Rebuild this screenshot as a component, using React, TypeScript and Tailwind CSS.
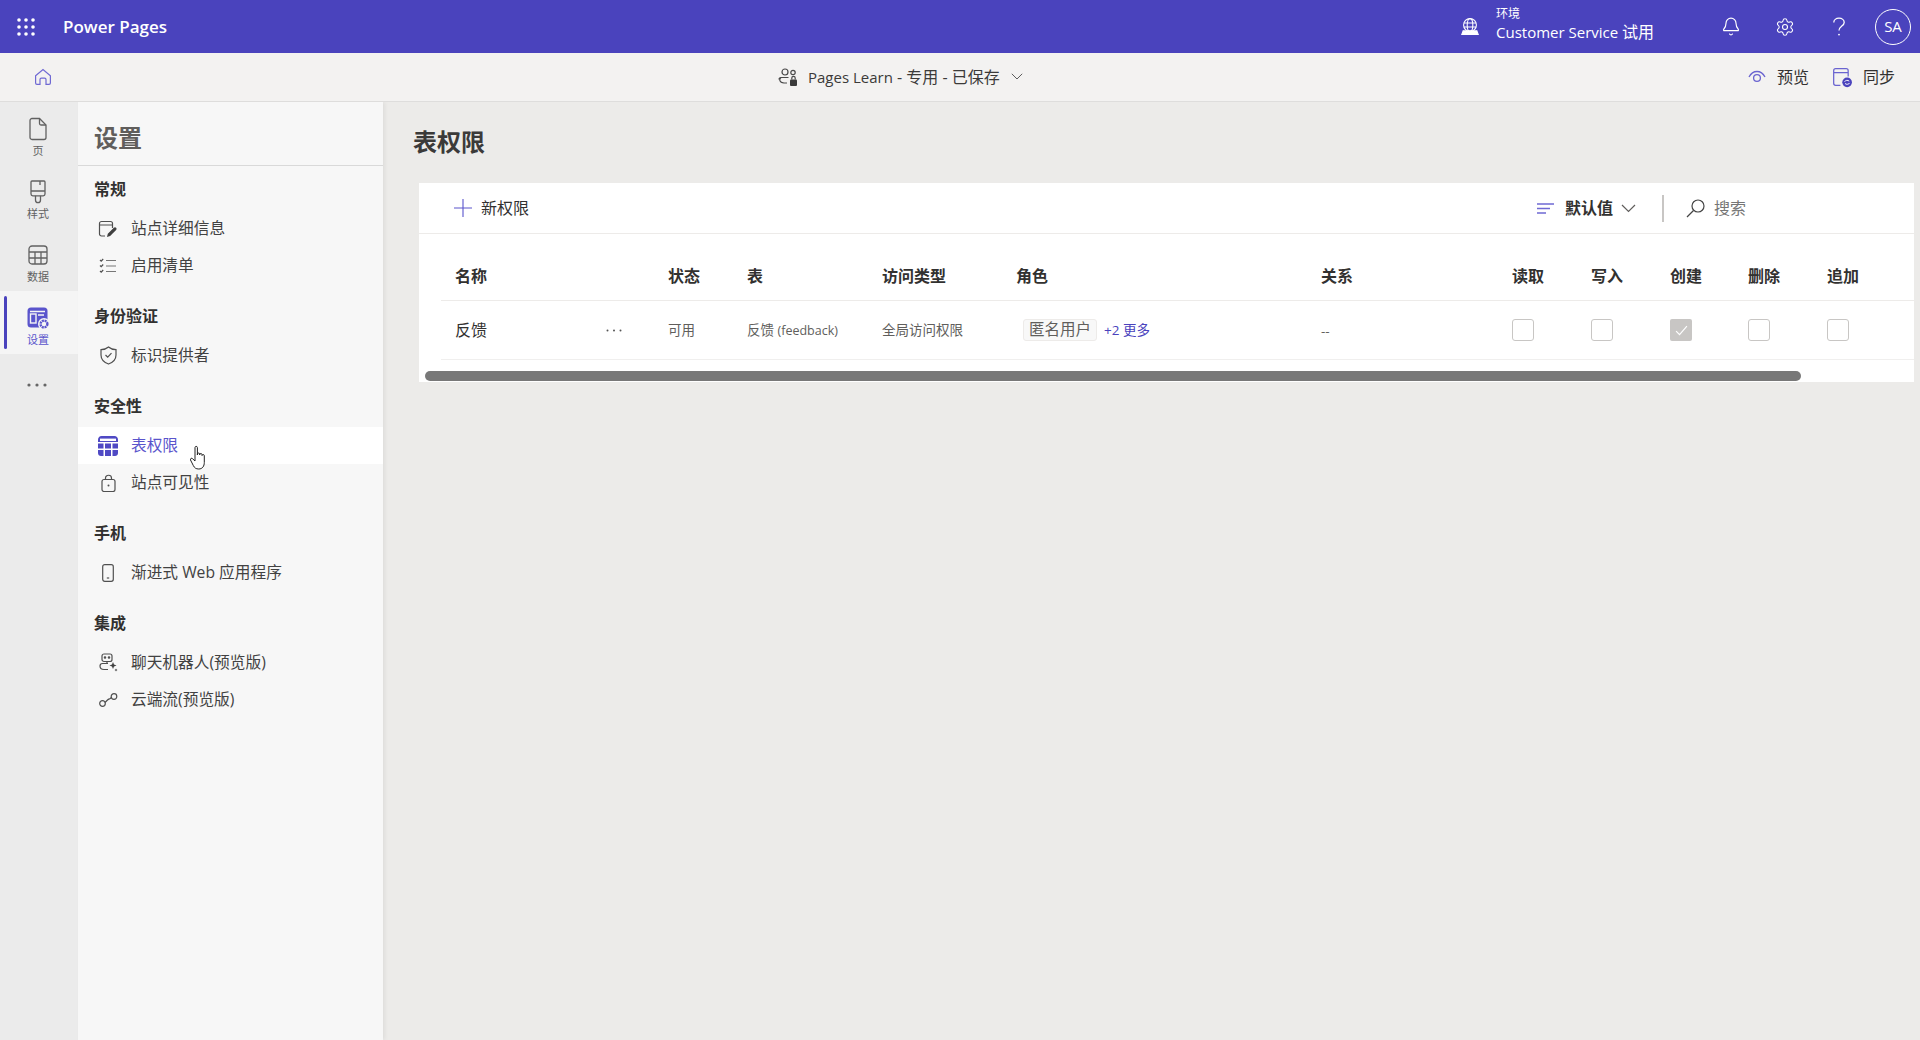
import { Bell, Settings } from "lucide-react"
import type { ReactNode } from "react"

function Waffle() {
  const dots = [2, 9, 16]
  return (
    <svg width="18" height="18" viewBox="0 0 18 18" fill="white">
      {dots.map((y) => dots.map((x) => <circle key={`${x}-${y}`} cx={x} cy={y} r="1.8" />))}
    </svg>
  )
}

function GlobeIcon() {
  return (
    <svg width="20" height="20" viewBox="0 0 20 20" fill="none" stroke="white" strokeWidth="1.1">
      <circle cx="10" cy="8" r="6.4" />
      <ellipse cx="10" cy="8" rx="2.8" ry="6.4" />
      <path d="M3.8 6h12.4M3.8 10h12.4" />
      <path d="M3.4 13.2 1.8 17.5h16.4l-1.6-4.3" fill="white" stroke="white" />
    </svg>
  )
}

function Chevron({ width, stroke }: { width: number; stroke: string }) {
  return (
    <svg width={width} height={width * 0.6} viewBox="0 0 15 9" fill="none" stroke={stroke} strokeWidth="1.2">
      <path d="M1 1l6.5 6.5L14 1" />
    </svg>
  )
}

function TopBar() {
  return (
    <header className="flex h-[53px] shrink-0 items-center bg-[#4a43bd] text-white">
      <div className="ml-[17px] flex w-[18px] justify-center">
        <Waffle />
      </div>
      <div className="ml-[28px] text-[17px] leading-none font-semibold">Power Pages</div>
      <div className="ml-auto flex items-center">
        <GlobeIcon />
        <div className="ml-[16px] flex w-[201px] flex-col pb-[4px]">
          <span className="text-[12px] leading-[14px]">环境</span>
          <span className="mt-[1px] text-[15px] leading-[20px]">
            Customer Service <span className="text-[16px]">试用</span>
          </span>
        </div>
        <div className="ml-[24px] flex w-[20px] justify-center">
          <Bell size={21} strokeWidth={1.4} />
        </div>
        <div className="ml-[34px] flex w-[20px] justify-center">
          <Settings size={22} strokeWidth={1.3} />
        </div>
        <div className="ml-[34px] flex w-[20px] justify-center">
          <svg width="14" height="20" viewBox="0 0 14 20" fill="none" stroke="white" strokeWidth="1.3">
            <path d="M1.8 5.4C1.8 3 4 1.2 7 1.2s5.2 1.8 5.2 4.2c0 3.6-5.2 3.8-5.2 8.2" />
            <circle cx="7" cy="17.6" r="0.9" fill="white" stroke="none" />
          </svg>
        </div>
        <div className="mr-[9px] ml-[26px] flex h-[36px] w-[36px] items-center justify-center rounded-full border border-white text-[15px]">
          SA
        </div>
      </div>
    </header>
  )
}

function HomeIcon() {
  return (
    <svg width="18" height="18" viewBox="0 0 18 18" fill="none" stroke="#6f69d3" strokeWidth="1.2">
      <path d="M1.6 7.8 9 1.6l7.4 6.2v7.2c0 .8-.6 1.4-1.4 1.4h-3V11.5c0-.8-.6-1.4-1.4-1.4H7.4c-.8 0-1.4.6-1.4 1.4v4.9H3c-.8 0-1.4-.6-1.4-1.4z" />
    </svg>
  )
}

function PeopleLockIcon() {
  return (
    <svg width="20" height="20" viewBox="0 0 20 20" fill="none" stroke="#4a4a4a" strokeWidth="1.2">
      <circle cx="7" cy="5" r="3" />
      <circle cx="15" cy="5.5" r="2.2" />
      <path d="M1 12.5c0-1.2 1-2 2-2h7.5M3 10.5c-2 1.5-2 5 3 5.5h3" />
      <rect x="12" y="12.5" width="7" height="6.5" rx="1" fill="#3a3a3a" stroke="none" />
      <path d="M13.8 12.5V11c0-2.2 3.4-2.2 3.4 0v1.5" />
    </svg>
  )
}

function EyeArcIcon() {
  return (
    <svg width="18" height="14" viewBox="0 0 18 14" fill="none" stroke="#6a64d0" strokeWidth="1.3">
      <path d="M1 7C3 3.2 5.8 1.5 9 1.5S15 3.2 17 7" />
      <circle cx="9" cy="8" r="3.4" />
    </svg>
  )
}

function SyncIcon() {
  return (
    <svg width="21" height="21" viewBox="0 0 20 20" fill="none" stroke="#6a64d0" strokeWidth="1.2">
      <path d="M8 17.4H3.5c-1.1 0-1.9-.8-1.9-1.9V3.5c0-1.1.8-1.9 1.9-1.9h10c1.1 0 1.9.8 1.9 1.9V9M1.6 5.4h13.8" />
      <circle cx="14.4" cy="14.6" r="4.6" fill="#4a43bd" stroke="none" />
      <path d="M12 14c.6-1.4 3.2-1.8 4.4-.5M16.8 15.2c-.6 1.4-3.2 1.8-4.4.5" stroke="white" strokeWidth="0.9" />
    </svg>
  )
}

function SubBar() {
  return (
    <div className="flex h-[49px] shrink-0 items-center border-b border-[#dedddc] bg-[#f3f2f1] text-[#323130]">
      <div className="ml-[34px] flex w-[18px] justify-center">
        <HomeIcon />
      </div>
      <div className="ml-[726px] flex items-center">
        <PeopleLockIcon />
        <span className="ml-[10px] text-[16px] text-[#3b3a39]">
          <span className="text-[15px]">Pages Learn</span> - 专用 - 已保存
        </span>
        <span className="ml-[11px]">
          <Chevron width={12} stroke="#555" />
        </span>
      </div>
      <div className="mr-[25px] ml-auto flex items-center">
        <EyeArcIcon />
        <span className="ml-[11px] text-[16px]">预览</span>
        <span className="ml-[23px]">
          <SyncIcon />
        </span>
        <span className="ml-[10px] text-[16px]">同步</span>
      </div>
    </div>
  )
}

const railIcon = { fill: "none", stroke: "#616161", strokeWidth: 1.3 }

function RailItem({ icon, label, active }: { icon: ReactNode; label: string; active?: boolean }) {
  return (
    <div className={`flex h-[63px] items-stretch ${active ? "bg-[#f5f5f5]" : ""}`}>
      <div className="w-[4px] shrink-0" />
      <div className={`my-[5px] w-[3px] rounded-full ${active ? "bg-[#4a43bd]" : ""}`} />
      <div className="flex flex-1 flex-col items-center pt-[15px] pr-[9px]">
        <div className="flex h-[24px] items-center justify-center">{icon}</div>
        <span className={`mt-[3px] text-[11px] leading-[14px] ${active ? "text-[#5a54cc]" : "text-[#616161]"}`}>
          {label}
        </span>
      </div>
    </div>
  )
}

function Rail() {
  return (
    <nav className="w-[78px] shrink-0 bg-[#ebebeb]">
      <RailItem
        label="页"
        icon={
          <svg width="20" height="24" viewBox="0 0 20 24" {...railIcon}>
            <path d="M2 3.5C2 2.4 2.9 1.5 4 1.5h7.5L18 8v12.5c0 1.1-.9 2-2 2H4c-1.1 0-2-.9-2-2z" />
            <path d="M11.5 1.5V6.5c0 .8.7 1.500 1.500 1.500h5" />
          </svg>
        }
      />
      <RailItem
        label="样式"
        icon={
          <svg width="18" height="24" viewBox="0 0 18 24" {...railIcon}>
            <path d="M2 2c0-.5.5-1 1-1h12c.5 0 1 .5 1 1v12c0 1-.8 1.8-1.8 1.8H3.8C2.8 15.8 2 15 2 14z" />
            <path d="M2 11h14M11 1v4M6.5 15.8V20c0 1.5 1 2.7 2.500 2.700s2.500-1.200 2.500-2.700v-4.200" />
          </svg>
        }
      />
      <RailItem
        label="数据"
        icon={
          <svg width="20" height="20" viewBox="0 0 20 20" {...railIcon}>
            <rect x="1" y="1" width="18" height="18" rx="3" />
            <path d="M1 7h18M1 13h18M7 7v12M13 7v12" />
          </svg>
        }
      />
      <RailItem
        active
        label="设置"
        icon={
          <svg width="23" height="23" viewBox="0 0 23 23">
            <rect x="0.5" y="0.5" width="20" height="20" rx="3.5" fill="#5a54cc" />
            <rect x="3.5" y="7" width="5.5" height="9" fill="none" stroke="#f5f5f5" strokeWidth="1.4" />
            <path d="M3 4.5h15M11 8h6" stroke="#f5f5f5" strokeWidth="1.4" />
            <circle cx="17" cy="17" r="6" fill="#f5f5f5" />
            <circle cx="17" cy="17" r="3.4" fill="none" stroke="#5a54cc" strokeWidth="2.4" strokeDasharray="2 0.7" />
          </svg>
        }
      />
      <div className="flex h-[62px] items-center justify-center pr-[5px]">
        <svg width="20" height="4" viewBox="0 0 20 4" fill="#666">
          <circle cx="2" cy="2" r="1.6" />
          <circle cx="10" cy="2" r="1.6" />
          <circle cx="18" cy="2" r="1.6" />
        </svg>
      </div>
    </nav>
  )
}

const sideIcon = { fill: "none", stroke: "#505050", strokeWidth: 1.2 }

const NAV_GROUPS: { title: string; items: { label: string; icon: ReactNode; active?: boolean }[] }[] = [
  {
    title: "常规",
    items: [
      {
        label: "站点详细信息",
        icon: (
          <svg width="20" height="18" viewBox="0 0 20 18" {...sideIcon}>
            <path d="M7 16H3.5C2.4 16 1.5 15.1 1.5 14V3.5c0-1.1.9-2 2-2h9c1.1 0 2 .9 2 2V8M1.5 5h13" />
            <path d="M9 17l.8-3.2 6-6c.7-.7 1.7-.7 2.3 0 .6.6.6 1.6 0 2.2l-6 6z" fill="#404040" stroke="none" />
          </svg>
        ),
      },
      {
        label: "启用清单",
        icon: (
          <svg width="18" height="16" viewBox="0 0 18 16" fill="none" stroke="#505050" strokeWidth="1.2">
            <path d="M1 2l1.2 1.2L4.2 1M1 7.5l1.2 1.2 2-2.2M1 13l1.2 1.2 2-2.2" />
            <path d="M7 2.5h10M7 8h10M7 13.5h10" stroke="#777" />
          </svg>
        ),
      },
    ],
  },
  {
    title: "身份验证",
    items: [
      {
        label: "标识提供者",
        icon: (
          <svg width="17" height="19" viewBox="0 0 17 19" {...sideIcon}>
            <path d="M8.5 1C6.5 2.8 4 3.6 1 3.7V9c0 4.2 2.5 7.2 7.5 9 5-1.8 7.5-4.8 7.5-9V3.7c-3-.1-5.5-.9-7.5-2.7z" />
            <path d="M5.5 9l2.2 2.2 3.8-4" />
          </svg>
        ),
      },
    ],
  },
  {
    title: "安全性",
    items: [
      {
        label: "表权限",
        active: true,
        icon: (
          <svg width="20" height="20" viewBox="0 0 20 20" fill="#4f49c4">
            <path d="M3.5 0h13C18.4 0 20 1.6 20 3.5V6H0V3.5C0 1.6 1.6 0 3.5 0z" />
            <path d="M2 2.6h16V5H2z" fill="white" />
            <path d="M0 7.5h5.5v5H0zM7 7.5h6v5H7zM14.5 7.5H20v5h-5.5zM0 14h5.5v6H3c-1.7 0-3-1.3-3-3zM7 14h6v6H7zM14.5 14H20v3c0 1.7-1.3 3-3 3h-2.5z" />
          </svg>
        ),
      },
      {
        label: "站点可见性",
        icon: (
          <svg width="15" height="18" viewBox="0 0 15 18" {...sideIcon}>
            <rect x="1" y="5.5" width="13" height="12" rx="2" />
            <path d="M4.5 5.5V4c0-3.7 6-3.7 6 0v1.5" />
            <circle cx="7.5" cy="11.5" r="1" fill="#505050" stroke="none" />
          </svg>
        ),
      },
    ],
  },
  {
    title: "手机",
    items: [
      {
        label: "渐进式 Web 应用程序",
        icon: (
          <svg width="12" height="18" viewBox="0 0 12 18" {...sideIcon}>
            <rect x="0.7" y="0.7" width="10.6" height="16.6" rx="2" />
            <path d="M4.8 14h2.4" />
          </svg>
        ),
      },
    ],
  },
  {
    title: "集成",
    items: [
      {
        label: "聊天机器人(预览版)",
        icon: (
          <svg width="19" height="19" viewBox="0 0 19 19" {...sideIcon}>
            <rect x="3" y="1" width="10" height="7.5" rx="2" />
            <path d="M8 8.5v2M1 13c0-1.5 1-2.5 2.5-2.5H9M1 13c0 2 1.5 3.5 4 3.5h4" />
            <circle cx="6" cy="4.5" r="0.7" fill="#505050" />
            <circle cx="10" cy="4.5" r="0.7" fill="#505050" />
            <path d="M14 9l1 2.500 2.500 1-2.500 1-1 2.500-1-2.500-2.500-1 2.500-1zM17 15.500l.5 1 1 .5-1 .5-.5 1-.5-1-1-.5 1-.5z" fill="#404040" stroke="none" />
          </svg>
        ),
      },
      {
        label: "云端流(预览版)",
        icon: (
          <svg width="19" height="14" viewBox="0 0 19 14" {...sideIcon}>
            <circle cx="3.5" cy="10.5" r="2.8" />
            <circle cx="15" cy="3.5" r="2.8" />
            <path d="M6 9.5 8.5 7c1-1 1.8-1 2.8-1.5L12.500 4" />
          </svg>
        ),
      },
    ],
  },
]

function Sidebar() {
  return (
    <aside className="relative z-10 flex w-[305px] shrink-0 flex-col bg-[#f7f7f7] shadow-[2px_0_4px_rgba(0,0,0,0.06)]">
      <div className="flex h-[64px] shrink-0 items-center border-b border-[#d9d9d9] pt-[8px] pl-[16px]">
        <h2 className="text-[24px] leading-none font-bold text-[#605e5c]">设置</h2>
      </div>
      <div className="flex flex-col gap-[17px] pt-[8px]">
        {NAV_GROUPS.map((group) => (
          <div key={group.title}>
            <div className="mb-[6px] flex h-[30px] items-center pl-[16px] text-[16px] font-semibold text-[#323130]">
              {group.title}
            </div>
            {group.items.map((item) => (
              <div
                key={item.label}
                className={`flex h-[37px] items-center ${item.active ? "bg-white text-[#5a54cc]" : "text-[#424242]"}`}
              >
                <div className="ml-[18px] flex w-[24px] justify-center">{item.icon}</div>
                <span className="ml-[11px] text-[15.7px]">{item.label}</span>
              </div>
            ))}
          </div>
        ))}
      </div>
      {/* hand cursor left over from the capture */}
      <svg className="absolute top-[343px] left-[112px]" width="19" height="25" viewBox="0 0 19 24" fill="white" stroke="#222" strokeWidth="1">
        <path d="M5 2c0-1.5 2.400-1.500 2.400 0v7.500-1c0-1.300 2.300-1.300 2.300 0v1-.5c0-1.300 2.300-1.300 2.300 0v1c0-1.200 2.300-1.200 2.300 0v7c0 3.500-1.800 6.500-5.500 6.500-3 0-4.300-1.200-5.500-3.500L.5 14.500c-.7-1.300 1.200-2.500 2.200-1.200L5 15.500z" />
      </svg>
    </aside>
  )
}

const GRID = "grid grid-cols-[213px_79px_135px_134px_305px_191px_79px_79px_78px_79px_1fr] items-center pl-[14px]"

const HEADERS = ["名称", "状态", "表", "访问类型", "角色", "关系", "读取", "写入", "创建", "删除", "追加"]

function Checkbox({ checked }: { checked?: boolean }) {
  if (checked) {
    return (
      <div className="flex h-[22px] w-[22px] items-center justify-center rounded-[2px] bg-[#c8c6c4]">
        <svg width="13" height="11" viewBox="0 0 12 10" fill="none" stroke="white" strokeWidth="1.1">
          <path d="M1 5.5 4.2 8.8 11 1" />
        </svg>
      </div>
    )
  }
  return <div className="h-[22px] w-[22px] rounded-[3px] border border-[#c8c6c4] bg-white" />
}

function PermissionTable() {
  return (
    <section className="mt-[25px] ml-[36px] flex h-[199px] flex-col bg-white">
      <div className="flex h-[51px] shrink-0 items-center border-b border-[#edebe9] pl-[35px]">
        <svg width="18" height="18" viewBox="0 0 18 18" stroke="#5a54cc" strokeWidth="1.1">
          <path d="M9 0v18M0 9h18" />
        </svg>
        <span className="ml-[9px] text-[16px] text-[#323130]">新权限</span>
        <div className="ml-auto flex items-center">
          <svg width="17" height="11" viewBox="0 0 17 11" stroke="#6f69d3" strokeWidth="1.4">
            <path d="M0 1h17M0 5.5h13M0 10h9" />
          </svg>
          <span className="ml-[11px] text-[16px] font-semibold text-[#323130]">默认值</span>
          <span className="ml-[8px]">
            <Chevron width={15} stroke="#605e5c" />
          </span>
          <div className="ml-[26px] h-[27px] w-[2px] bg-[#c8c6c4]" />
          <svg className="ml-[22px]" width="19" height="19" viewBox="0 0 19 19" fill="none" stroke="#444" strokeWidth="1.2">
            <circle cx="12" cy="7" r="6" />
            <path d="M7.5 11.5 1 18" />
          </svg>
          <span className="mr-[168px] ml-[9px] text-[16px] text-[#767676]">搜索</span>
        </div>
      </div>
      <div className={`${GRID} ml-[22px] h-[67px] shrink-0 border-b border-[#edebe9] pt-[18px]`}>
        {HEADERS.map((h) => (
          <div key={h} className="text-[16px] font-semibold text-[#323130]">
            {h}
          </div>
        ))}
      </div>
      <div className={`${GRID} ml-[22px] h-[59px] shrink-0 border-b border-[#f0efee] text-[13.5px] text-[#605e5c]`}>
        <div className="flex items-center">
          <span className="w-[144px] text-[16px] text-[#323130]">反馈</span>
          <span className="flex w-[30px] justify-center">
            <svg width="16" height="3" viewBox="0 0 16 3" fill="#555">
              <circle cx="1.5" cy="1.5" r="1" />
              <circle cx="8" cy="1.5" r="1" />
              <circle cx="14.5" cy="1.5" r="1" />
            </svg>
          </span>
        </div>
        <div>可用</div>
        <div>
          反馈 <span className="text-[12.5px]">(feedback)</span>
        </div>
        <div>全局访问权限</div>
        <div className="flex items-center pl-[7px]">
          <span className="flex h-[22px] items-center rounded-[3px] border border-[#edebe9] bg-[#f8f8f8] px-[5px] text-[15.5px] text-[#605e5c]">
            匿名用户
          </span>
          <span className="ml-[7px] text-[#4a43bd]">+2 更多</span>
        </div>
        <div className="pt-[3px]">--</div>
        <Checkbox />
        <Checkbox />
        <Checkbox checked />
        <Checkbox />
        <Checkbox />
      </div>
      <div className="mt-[11px] ml-[6px] h-[10px] w-[1376px] shrink-0 rounded-full bg-[#787878]" />
    </section>
  )
}

export default function App() {
  return (
    <div className="flex h-screen w-full flex-col overflow-hidden bg-[#ecebe9] font-['Open_Sans','Noto_Sans_CJK_SC',sans-serif]">
      <TopBar />
      <SubBar />
      <div className="flex flex-1 overflow-hidden">
        <Rail />
        <Sidebar />
        <main className="flex-1 pr-[6px]">
          <h1 className="mt-[24px] ml-[30px] text-[24px] leading-[32px] font-bold text-[#3b3a39]">表权限</h1>
          <PermissionTable />
        </main>
      </div>
    </div>
  )
}
